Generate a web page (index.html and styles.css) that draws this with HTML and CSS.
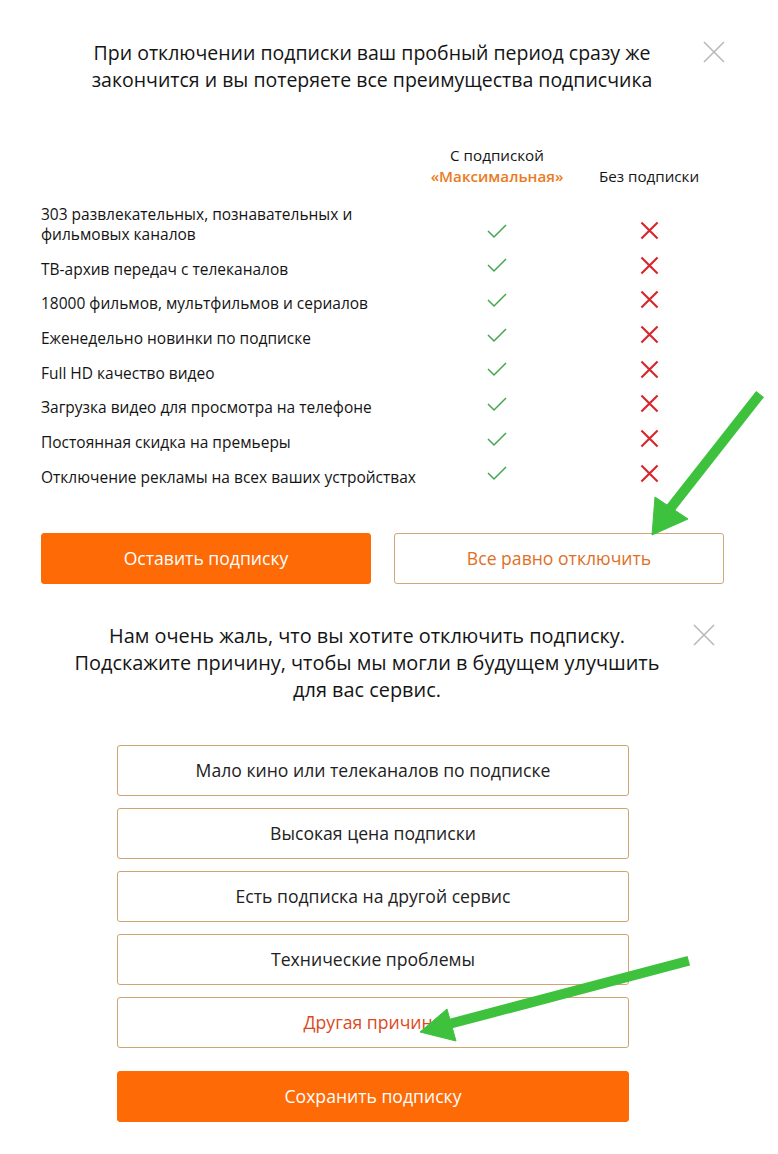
FILE: index.html
```html
<!DOCTYPE html>
<html lang="ru">
<head>
<meta charset="utf-8">
<title>Отключение подписки</title>
<link rel="stylesheet" href="styles.css">
</head>
<body>
<div class="page">
  <section class="panel panel-compare">
    <div class="head head-one">
      <h2 class="title">При отключении подписки ваш пробный период сразу же<br>закончится и вы потеряете все преимущества подписчика</h2>
      <button class="close" aria-label="Закрыть"><svg viewBox="0 0 22 22" width="22" height="22"><path d="M1 1L21 21M21 1L1 21" stroke="#b9b9b9" stroke-width="1.6" fill="none"/></svg></button>
    </div>

    <div class="table">
      <div class="thead">
        <div></div>
        <div class="th">С подпиской<br><span class="accent">«Максимальная»</span></div>
        <div class="th">Без подписки</div>
      </div>
      <div class="row"><div class="feat">303 развлекательных, познавательных и<br>фильмовых каналов</div><div class="ic"><svg class="yes" viewBox="0 0 20 14"><path d="M1 7L7 13L19 1"/></svg></div><div class="ic"><svg class="no" viewBox="0 0 20 20"><path d="M1.5 1.5L18.5 18.5M18.5 1.5L1.5 18.5"/></svg></div></div>
      <div class="row"><div class="feat">ТВ-архив передач с телеканалов</div><div class="ic"><svg class="yes" viewBox="0 0 20 14"><path d="M1 7L7 13L19 1"/></svg></div><div class="ic"><svg class="no" viewBox="0 0 20 20"><path d="M1.5 1.5L18.5 18.5M18.5 1.5L1.5 18.5"/></svg></div></div>
      <div class="row"><div class="feat">18000 фильмов, мультфильмов и сериалов</div><div class="ic"><svg class="yes" viewBox="0 0 20 14"><path d="M1 7L7 13L19 1"/></svg></div><div class="ic"><svg class="no" viewBox="0 0 20 20"><path d="M1.5 1.5L18.5 18.5M18.5 1.5L1.5 18.5"/></svg></div></div>
      <div class="row"><div class="feat">Еженедельно новинки по подписке</div><div class="ic"><svg class="yes" viewBox="0 0 20 14"><path d="M1 7L7 13L19 1"/></svg></div><div class="ic"><svg class="no" viewBox="0 0 20 20"><path d="M1.5 1.5L18.5 18.5M18.5 1.5L1.5 18.5"/></svg></div></div>
      <div class="row"><div class="feat">Full HD качество видео</div><div class="ic"><svg class="yes" viewBox="0 0 20 14"><path d="M1 7L7 13L19 1"/></svg></div><div class="ic"><svg class="no" viewBox="0 0 20 20"><path d="M1.5 1.5L18.5 18.5M18.5 1.5L1.5 18.5"/></svg></div></div>
      <div class="row"><div class="feat">Загрузка видео для просмотра на телефоне</div><div class="ic"><svg class="yes" viewBox="0 0 20 14"><path d="M1 7L7 13L19 1"/></svg></div><div class="ic"><svg class="no" viewBox="0 0 20 20"><path d="M1.5 1.5L18.5 18.5M18.5 1.5L1.5 18.5"/></svg></div></div>
      <div class="row"><div class="feat">Постоянная скидка на премьеры</div><div class="ic"><svg class="yes" viewBox="0 0 20 14"><path d="M1 7L7 13L19 1"/></svg></div><div class="ic"><svg class="no" viewBox="0 0 20 20"><path d="M1.5 1.5L18.5 18.5M18.5 1.5L1.5 18.5"/></svg></div></div>
      <div class="row"><div class="feat">Отключение рекламы на всех ваших устройствах</div><div class="ic"><svg class="yes" viewBox="0 0 20 14"><path d="M1 7L7 13L19 1"/></svg></div><div class="ic"><svg class="no" viewBox="0 0 20 20"><path d="M1.5 1.5L18.5 18.5M18.5 1.5L1.5 18.5"/></svg></div></div>
    </div>

    <div class="actions">
      <button class="btn btn-primary">Оставить подписку</button>
      <button class="btn btn-outline">Все равно отключить</button>
    </div>
  </section>

  <section class="panel panel-reason">
    <div class="head head-two">
      <h2 class="title title-two">Нам очень жаль, что вы хотите отключить подписку.<br>Подскажите причину, чтобы мы могли в будущем улучшить<br>для вас сервис.</h2>
      <button class="close" aria-label="Закрыть"><svg viewBox="0 0 22 22" width="22" height="22"><path d="M1 1L21 21M21 1L1 21" stroke="#b9b9b9" stroke-width="1.6" fill="none"/></svg></button>
    </div>
    <div class="reasons">
      <button class="reason">Мало кино или телеканалов по подписке</button>
      <button class="reason">Высокая цена подписки</button>
      <button class="reason">Есть подписка на другой сервис</button>
      <button class="reason">Технические проблемы</button>
      <button class="reason reason-other">Другая причина</button>
      <button class="btn btn-primary btn-save">Сохранить подписку</button>
    </div>
  </section>

  <svg class="arrows" viewBox="0 0 778 1154" width="778" height="1154" aria-hidden="true">
    <g fill="#3ec23e" stroke="#3ec23e" stroke-linejoin="round">
      <line x1="757" y1="398" x2="673" y2="505" stroke-width="10" stroke-linecap="square"/>
      <polygon points="655,497 688,519 652,535" stroke-width="1"/>
      <line x1="684" y1="962" x2="453" y2="1023" stroke-width="10" stroke-linecap="square"/>
      <polygon points="447,1009 456,1041 420,1032" stroke-width="1"/>
    </g>
  </svg>
</div>
</body>
</html>
```

FILE: styles.css
```css
* {
  box-sizing: border-box;
}

html, body {
  margin: 0;
  padding: 0;
  background: #ffffff;
}

body {
  font-family: "Open Sans", "Noto Sans", "Liberation Sans", sans-serif;
  color: #1a1a1a;
}

.page {
  position: relative;
  width: 778px;
  min-height: 1154px;
}

.head {
  display: flex;
  align-items: flex-start;
}

.head-one {
  padding: 39px 53px 0 41px;
}

.head-two {
  padding: 0 63px 0 41px;
}

.title {
  flex: 1;
  margin: 0;
  font-size: 19.5px;
  line-height: 27px;
  font-weight: 400;
  text-align: center;
  color: #141414;
}

.title-two {
  font-size: 19.9px;
}

.close {
  flex: none;
  width: 22px;
  height: 22px;
  margin-top: 2px;
  padding: 0;
  border: 0;
  background: none;
  display: flex;
}

/* comparison table */
.table {
  padding: 0 53px 0 41px;
  margin-top: 51.5px;
}

.thead,
.row {
  display: grid;
  grid-template-columns: 380px 152px 152px;
}

.thead {
  align-items: end;
  margin-bottom: 17.5px;
}

.th {
  font-size: 15.2px;
  line-height: 21px;
  text-align: center;
  color: #141414;
}

.accent {
  color: #ec7a22;
  font-weight: 600;
}

.row {
  align-items: end;
}

.row + .row {
  margin-top: 14.7px;
}

.feat {
  font-size: 15.5px;
  line-height: 20px;
  color: #141414;
}

.ic {
  height: 20px;
  padding-bottom: 7px;
  display: flex;
  align-items: center;
  justify-content: center;
}

.yes {
  width: 20px;
  height: 14px;
  fill: none;
  stroke: #45a54d;
  stroke-width: 1.5;
  overflow: visible;
}

.no {
  width: 19px;
  height: 19px;
  fill: none;
  stroke: #d6282e;
  stroke-width: 2.3;
  overflow: visible;
}

/* buttons */
.actions {
  display: grid;
  grid-template-columns: 1fr 1fr;
  gap: 23px;
  padding: 0 54px 0 41px;
  margin-top: 46px;
}

.btn {
  height: 51px;
  border-radius: 3px;
  font-family: inherit;
  font-size: 17.6px;
  font-weight: 500;
  cursor: pointer;
}

.btn-primary {
  background: #fe6a06;
  border: 1px solid #fe6a06;
  color: #ffffff;
}

.btn-outline {
  background: #ffffff;
  border: 1px solid #cfa77a;
  color: #e0701f;
}

.panel-reason {
  margin-top: 38.5px;
}

.reasons {
  width: 512px;
  margin: 41.5px 0 0 117px;
  display: flex;
  flex-direction: column;
  gap: 12px;
}

.reason {
  height: 51px;
  border: 1px solid #cda573;
  border-radius: 3px;
  background: #ffffff;
  font-family: inherit;
  font-size: 17.6px;
  color: #222222;
}

.reason-other {
  color: #da4a1e;
}

.btn-save {
  margin-top: 11px;
}

.arrows {
  position: absolute;
  left: 0;
  top: 0;
  pointer-events: none;
}
```
